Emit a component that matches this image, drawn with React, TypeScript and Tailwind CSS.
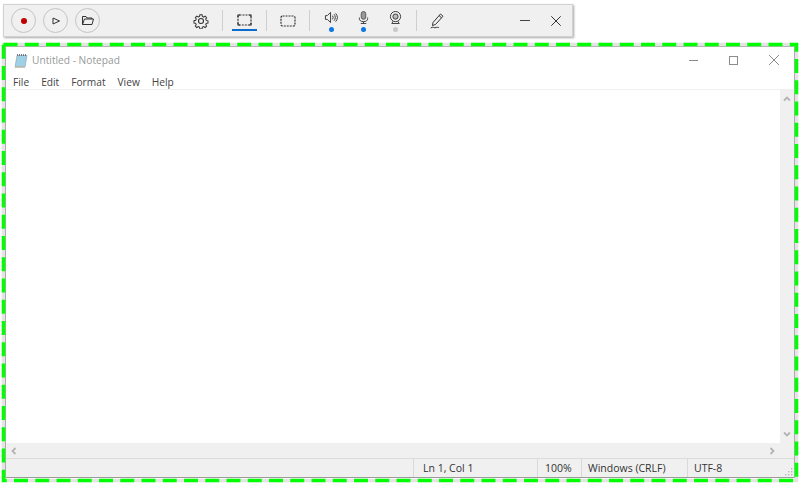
import React from "react";

const font = { fontFamily: '"Open Sans", "Noto Sans", sans-serif' };

function Sep({ ml }: { ml: string }) {
  return <div className={`w-px h-[21px] bg-[#cfcfcf] shrink-0 ${ml}`} />;
}

function Circle({ children }: { children: React.ReactNode }) {
  return (
    <div className="w-[25px] h-[25px] rounded-full border border-[#c4c4c4] flex items-center justify-center shrink-0">
      {children}
    </div>
  );
}

function Dot({ c }: { c: string }) {
  return <div className={`w-[5px] h-[5px] rounded-full mt-[3px] ${c}`} />;
}

const stroke = { fill: "none", stroke: "#333", strokeWidth: 1 } as const;

function Toolbar() {
  return (
    <div className="ml-[3px] mt-[4px] w-[570px] h-[33px] bg-[#f0f0f0] border border-[#d2d2d2] shadow-[1px_1px_2px_rgba(0,0,0,0.35)] flex items-center pl-[7px]">
      <div className="flex gap-[7px]">
        <Circle>
          <div className="w-[6px] h-[6px] rounded-full bg-[#c00000]" />
        </Circle>
        <Circle>
          <svg width="8" height="8" viewBox="0 0 8 8" {...stroke}>
            <path d="M1 1 L1 7 L7.5 4 Z" />
          </svg>
        </Circle>
        <Circle>
          <svg width="12" height="9" viewBox="0 0 12 9" {...stroke}>
            <path d="M0.5 8.5 V0.5 H4 L5 2 H10 V3 M0.5 8.5 L2.5 3 H11.5 L10 8.5 Z" />
          </svg>
        </Circle>
      </div>
      <svg className="ml-[93px] shrink-0" width="16" height="16" viewBox="0 0 16 16" {...stroke} strokeWidth={1.1}>
        <circle cx="8" cy="8" r="2.5" />
        <path d="M6.8 1.2h2.4l.4 1.9 1.3.6 1.7-1 1.6 1.7-1 1.6.6 1.4 1.9.4v2.4l-1.9.4-.6 1.3 1 1.7-1.6 1.6-1.7-1-1.3.6-.4 1.9H6.8l-.4-1.9-1.3-.6-1.7 1-1.6-1.6 1-1.7-.6-1.3-1.9-.4V7.7l1.9-.4.6-1.4-1-1.6 1.6-1.7 1.7 1 1.3-.6z" transform="translate(.7 .7) scale(.91)" />
      </svg>
      <Sep ml="ml-[13px]" />
      <div className="ml-[9px] w-[25px] h-[24px] relative flex justify-center pt-[7px] shrink-0 self-start mt-[2px]">
        <svg width="15" height="12" viewBox="0 0 15 12" fill="none" stroke="#333" strokeWidth="1.2">
          <rect x="1" y="1" width="13" height="10" rx="1.5" strokeDasharray="2 1" />
          <path d="M1 3V1H3M12 1h2v2M1 9v2h2M14 9v2h-2" strokeWidth="1.2" />
        </svg>
        <div className="absolute left-0 right-0 h-[2px] bg-[#0a6ccf] top-[22px]" />
      </div>
      <Sep ml="ml-[9px]" />
      <svg className="ml-[13px] shrink-0" width="16" height="12" viewBox="0 0 16 12" fill="none" stroke="#333" strokeWidth="1.2" strokeDasharray="2 1">
        <rect x="1" y="1" width="14" height="10" rx="1.5" />
      </svg>
      <Sep ml="ml-[13px]" />
      <div className="ml-[13px] w-[16px] flex flex-col items-center shrink-0 self-start mt-[6px]">
        <svg width="14" height="13" viewBox="0 0 14 14" {...stroke}>
          <path d="M1 5H3L6.5 1.5V12.5L3 9H1Z" />
          <path d="M8.5 5a3 3 0 0 1 0 4M10.2 3.5a5 5 0 0 1 0 7M12 2.5a7 7 0 0 1 0 9" />
        </svg>
        <Dot c="bg-[#0a78e0]" />
      </div>
      <div className="ml-[16px] w-[16px] flex flex-col items-center shrink-0 self-start mt-[6px]">
        <svg width="11" height="13" viewBox="0 0 12 14" {...stroke}>
          <rect x="3.5" y="0.5" width="5" height="8.5" rx="2.5" fill="#999" stroke="#555" />
          <path d="M1.5 7V8a4.5 3.5 0 0 0 9 0V7M6 11.5V13.5M3 13.5H9" />
        </svg>
        <Dot c="bg-[#0a78e0]" />
      </div>
      <div className="ml-[16px] w-[16px] flex flex-col items-center shrink-0 self-start mt-[6px]">
        <svg width="13" height="13" viewBox="0 0 14 14" {...stroke}>
          <circle cx="7" cy="6" r="5.5" />
          <circle cx="7" cy="6" r="2.8" fill="#bbb" />
          <path d="M4.5 11L3 13.5H11L9.5 11" />
        </svg>
        <Dot c="bg-[#c8c8c8]" />
      </div>
      <Sep ml="ml-[13px]" />
      <svg className="ml-[13px] shrink-0" width="14" height="16" viewBox="0 0 14 16" {...stroke}>
        <path d="M10.5 1L13 3.2L5.5 11.5L2.5 12.5L3 9.5Z M9 2.5L11.5 4.8" />
        <path d="M0.8 15C3 13 4 15.5 6 14.5C7 14 8 14.5 9 14.5" />
      </svg>
      <div className="ml-[76px] w-[10px] h-[1.5px] bg-[#444] shrink-0" />
      <svg className="ml-[21px] shrink-0" width="10" height="10" viewBox="0 0 10 10" {...stroke}>
        <path d="M0.3 0.3L9.7 9.7M9.7 0.3L0.3 9.7" />
      </svg>
    </div>
  );
}

function Chevron({ d }: { d: string }) {
  return (
    <svg width="8" height="8" viewBox="0 0 8 8" fill="none" stroke="#b4b4b4" strokeWidth="1.8" className="shrink-0">
      <path d={d} />
    </svg>
  );
}

function Notepad() {
  return (
    <div className="absolute left-[5px] top-[46px] w-[790px] h-[432px] bg-white border border-[#9b9b9b] border-t-[#a8a8a8] flex flex-col">
      <div className="h-[26px] flex items-center shrink-0">
        <svg className="ml-[8px] shrink-0" width="14" height="15" viewBox="0 0 14 15">
          <path d="M3 2.5H13L11 14H1Z" fill="#9fd0e6" stroke="#7f9fb0" strokeWidth="0.6" />
          <path d="M3 2H13" stroke="#556" strokeWidth="1.4" strokeDasharray="1 1" />
          <path d="M1 14H11" stroke="#c4b69a" strokeWidth="1.2" />
        </svg>
        <span className="ml-[4px] text-[10.2px] text-[#999] leading-none">Untitled - Notepad</span>
        <div className="ml-auto w-[9px] h-px bg-[#8c8c8c]" />
        <div className="ml-[31px] w-[9px] h-[9px] border border-[#8c8c8c]" />
        <svg className="ml-[31px] mr-[15px]" width="10" height="10" viewBox="0 0 10 10" fill="none" stroke="#8c8c8c">
          <path d="M0 0L10 10M10 0L0 10" />
        </svg>
      </div>
      <div className="h-[17px] flex items-center text-[10.2px] text-[#444] leading-none shrink-0 border-b border-[#f0f0f0] pt-[2px]">
        <span className="ml-[7px]">File</span>
        <span className="ml-[12px]">Edit</span>
        <span className="ml-[12px]">Format</span>
        <span className="ml-[12px]">View</span>
        <span className="ml-[12px]">Help</span>
      </div>
      <div className="flex-1 flex min-h-0">
        <div className="flex-1" />
        <div className="w-[14px] bg-[#f0f0f0] flex flex-col items-center justify-between py-[5px]">
          <Chevron d="M1 5.5L4 2.5L7 5.5" />
          <Chevron d="M1 2.5L4 5.5L7 2.5" />
        </div>
      </div>
      <div className="h-[15px] bg-[#f0f0f0] flex items-center justify-between pl-[4px] pr-[18px] shrink-0">
        <Chevron d="M5.5 1L2.5 4L5.5 7" />
        <Chevron d="M2.5 1L5.5 4L2.5 7" />
      </div>
      <div className="h-[19px] bg-[#f0f0f0] border-t border-[#dcdcdc] flex items-center text-[10.5px] text-[#333] leading-none shrink-0 relative">
        <div className="w-[407px]" />
        <div className="w-[124px] h-full border-l border-[#d9d9d9] pl-[9px] flex items-center">Ln 1, Col 1</div>
        <div className="w-[44px] h-full border-l border-[#d9d9d9] pl-[7px] flex items-center">100%</div>
        <div className="w-[106px] h-full border-l border-[#d9d9d9] pl-[6px] flex items-center">Windows (CRLF)</div>
        <div className="flex-1 h-full border-l border-[#d9d9d9] pl-[6px] flex items-center">UTF-8</div>
        <svg className="absolute right-[1px] bottom-[1px]" width="8" height="8" viewBox="0 0 8 8" fill="#b8b8b8">
          <rect x="6" y="0" width="1.4" height="1.4" />
          <rect x="3" y="3" width="1.4" height="1.4" />
          <rect x="6" y="3" width="1.4" height="1.4" />
          <rect x="0" y="6" width="1.4" height="1.4" />
          <rect x="3" y="6" width="1.4" height="1.4" />
          <rect x="6" y="6" width="1.4" height="1.4" />
        </svg>
      </div>
    </div>
  );
}

export default function App() {
  return (
    <div className="w-[800px] h-[484px] bg-white overflow-hidden relative flex flex-col" style={font}>
      <Toolbar />
      <Notepad />
      <svg className="absolute left-0 top-0 pointer-events-none" width="800" height="484" fill="none">
        <rect x="3.5" y="44.5" width="793" height="436" stroke="#e4e4e4" strokeWidth="3.5" />
        <rect x="3.5" y="44.5" width="793" height="436" stroke="#00ff00" strokeWidth="3.5" strokeDasharray="14 7.25" />
      </svg>
    </div>
  );
}
